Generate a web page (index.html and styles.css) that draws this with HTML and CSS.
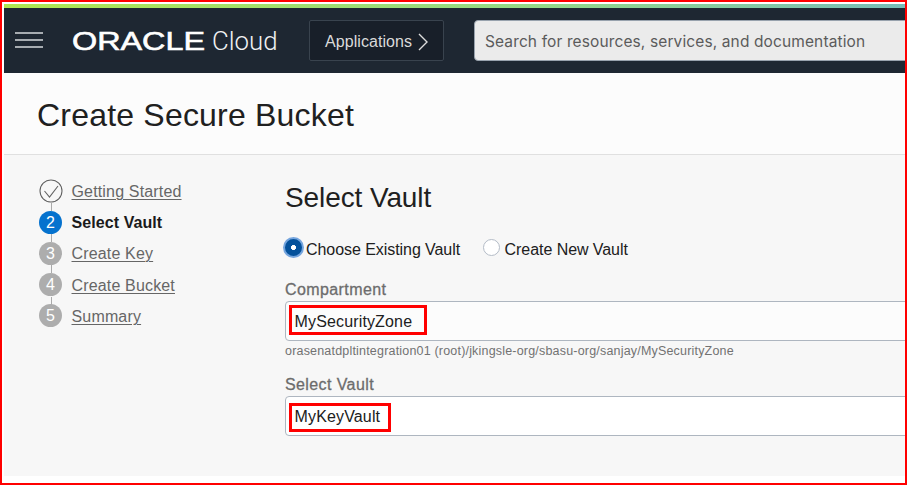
FILE: index.html
```
<!DOCTYPE html>
<html lang="en">
<head>
<meta charset="utf-8">
<title>Create Secure Bucket</title>
<link rel="stylesheet" href="styles.css">
</head>
<body>
<div class="frame">
  <div class="accent"></div>
  <header class="topbar">
    <svg class="menu" width="28" height="16" viewBox="0 0 28 16"><path d="M0 1h28M0 8h28M0 15h28" stroke="#d5d9dc" stroke-width="1.4"/></svg>
    <svg class="brand" width="210" height="28" viewBox="0 0 210 28">
      <text class="brand-name" x="0" y="22.5" textLength="133" lengthAdjust="spacingAndGlyphs">ORACLE</text>
      <text class="brand-cloud" x="140" y="22.5" textLength="65.500" lengthAdjust="spacingAndGlyphs">Cloud</text>
    </svg>
    <button class="apps"><span>Applications</span><svg width="10" height="18" viewBox="0 0 10 18"><path d="M1 1l8 8-8 8" fill="none" stroke="#dcdcdc" stroke-width="1.4"/></svg></button>
    <div class="search">Search for resources, services, and documentation</div>
  </header>
  <div class="heading"><h1>Create Secure Bucket</h1></div>
  <main class="content">
    <ol class="steps">
      <li><svg class="dot" width="24" height="24" viewBox="0 0 24 24"><circle cx="12" cy="12" r="11" fill="none" stroke="#626262" stroke-width="1.1"/><path d="M5.500 12l5 6L19 7" fill="none" stroke="#626262" stroke-width="1.1"/></svg><a>Getting Started</a></li>
      <li class="current"><span class="dot">2</span><b>Select Vault</b></li>
      <li><span class="dot">3</span><a>Create Key</a></li>
      <li><span class="dot">4</span><a>Create Bucket</a></li>
      <li><span class="dot">5</span><a>Summary</a></li>
    </ol>
    <section class="form">
      <h2>Select Vault</h2>
      <div class="choices">
        <span class="radio checked"></span><span class="choice">Choose Existing Vault</span>
        <span class="radio"></span><span class="choice">Create New Vault</span>
      </div>
      <div class="label">Compartment</div>
      <div class="field soft"><span class="mark zone">MySecurityZone</span></div>
      <div class="hint">orasenatdpltintegration01 (root)/jkingsle-org/sbasu-org/sanjay/MySecurityZone</div>
      <div class="label">Select Vault</div>
      <div class="field"><span class="mark vault">MyKeyVault</span></div>
    </section>
  </main>
</div>
</body>
</html>
```
FILE: styles.css
```
* { box-sizing: border-box; }
body { margin: 0; background: #fff; font-family: "Liberation Sans", Arial, sans-serif; font-size: 16px; color: #202020; overflow: hidden; }
.frame { width: 907px; height: 485px; border: 2px solid #f00; padding: 2px 0 7px 2px; display: flex; flex-direction: column; overflow: hidden; }
.accent { height: 4px; flex: none; background: linear-gradient(90deg, #b0e650, #94d888 60%, #78bdb8); }
.topbar { height: 65px; flex: none; background: #1e2732; display: flex; align-items: center; padding-left: 11px; overflow: hidden; }
.menu { flex: none; margin-top: -2px; }
.brand { flex: none; margin-left: 29px; overflow: visible; }
.brand-name { font-size: 25px; fill: #fff; stroke: #fff; stroke-width: .6px; }
.brand-cloud { font-family: Roboto, sans-serif; font-weight: 300; font-size: 26px; fill: #f0f1f2; }
.apps { flex: none; width: 135px; height: 41px; margin-left: 27px; padding: 2px 0 0 15px; display: flex; align-items: center; gap: 6px; font: 16px "Liberation Sans", Arial, sans-serif; letter-spacing: .06px; color: #dadada; background: #181f29; border: 1px solid #39434e; border-radius: 2px; }
.search { flex: none; width: 460px; height: 41px; margin-left: 30px; padding-left: 10px; line-height: 42px; background: #ebebeb; border: 1px solid #98a2ad; border-radius: 4px; color: #5b5b5b; font-family: Inter, sans-serif; font-size: 15.500px; letter-spacing: .12px; white-space: nowrap; }
.heading { height: 82px; flex: none; background: #fcfcfc; border-bottom: 1px solid #e0e0e0; padding-left: 33px; }
h1, h2 { margin: 0; font-weight: 400; }
h1 { font-size: 32px; line-height: 84px; letter-spacing: .2px; }
.content { flex: 1; min-height: 0; background: #f7f7f7; display: flex; }
.steps { list-style: none; margin: 0; padding: 24px 0 0 34.500px; width: 281px; flex: none; }
.steps li { height: 31.200px; display: flex; align-items: flex-start; position: relative; line-height: 25px; color: #666; letter-spacing: .16px; }
.steps li:not(:last-child)::after { content: ""; position: absolute; left: 12px; top: 24px; width: 1px; height: 8px; background: #aaa; }
.steps a { text-decoration: underline; text-decoration-thickness: 1px; text-underline-offset: 2px; }
.steps b { color: #1b1b1b; letter-spacing: .08px; }
.dot { width: 24px; height: 24px; flex: none; margin-right: 9px; border-radius: 50%; text-align: center; line-height: 24px; }
span.dot { background: #adadad; color: #fff; width: 23px; height: 23px; margin: .5px 9.500px 0 .5px; }
.current span.dot { background: #0572ce; }
.form { flex: 1; min-width: 0; padding-top: 22px; }
h2 { font-size: 28px; line-height: 42px; height: 42px; letter-spacing: -.1px; }
.choices { height: 61px; padding-top: 19px; display: flex; align-items: flex-start; }
.choice { line-height: 23px; letter-spacing: -.06px; }
.radio { width: 17px; height: 17px; margin: 1px 4.500px 0 23px; border: 1px solid #b4bcc7; border-radius: 50%; background: #fff; flex: none; }
.radio.checked { width: 21px; height: 21px; margin: -1px 2px 0 -2px; border: 2px solid #75a5de; background: radial-gradient(circle, #fff 0 2.200px, #04519b 2.800px); }
.label { height: 21px; line-height: 20px; color: #6c6c6c; letter-spacing: .4px; -webkit-text-stroke: .3px #6c6c6c; }
.field { width: 640px; height: 40px; border: 1px solid #aeb6c0; border-radius: 4px; background: #fff; padding: 3px; display: flex; align-items: flex-start; }
.field.soft { background: #fcfcfc; }
.mark { border: 3px solid #f00; height: 30px; line-height: 27px; padding-left: 2.500px; letter-spacing: .15px; }
.zone { width: 138px; }
.vault { width: 102px; height: 29px; margin-top: 3px; line-height: 21px; }
.hint { height: 34px; line-height: 20px; font-size: 12.500px; letter-spacing: .19px; color: #727272; white-space: nowrap; }
```
